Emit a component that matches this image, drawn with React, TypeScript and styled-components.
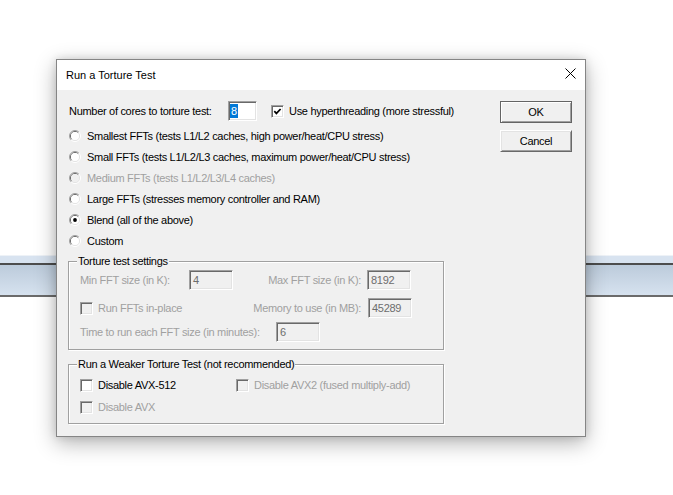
import React from 'react';
import styled, { createGlobalStyle, css } from 'styled-components';

const UI_FONT = `"Liberation Sans", Arial, sans-serif`;

const GlobalStyle = createGlobalStyle`
  html, body {
    margin: 0;
    padding: 0;
    background: #ffffff;
  }
  * {
    box-sizing: border-box;
  }
`;

const Desktop = styled.div`
  position: relative;
  width: 673px;
  height: 495px;
  overflow: hidden;
  background: #ffffff;
  font-family: ${UI_FONT};
  font-size: 11px;
  color: #000;
`;

/* the toolbar strip of the window behind the dialog */
const Band = styled.div`
  margin-top: 255px;
`;

const BandCap = styled.div`
  height: 8px;
  border-top: 1px solid #eef2f7;
  background: #d8e3f0;
`;

const BandRail = styled.div`
  height: 34px;
  border-top: 2px solid #4d4d4d;
  border-bottom: 2px solid #6b6b6b;
  background: linear-gradient(180deg, #bccbdb 0%, #d6e2ef 100%);
`;

const Window = styled.section`
  position: absolute;
  left: 56px;
  top: 59px;
  width: 530px;
  height: 378px;
  display: flex;
  flex-direction: column;
  border: 1px solid #858585;
  background: #f0f0f0;
  box-shadow: 0 6px 20px rgba(0, 0, 0, 0.3), 0 0 8px rgba(0, 0, 0, 0.12);
`;

const TitleBar = styled.header`
  height: 30px;
  flex: none;
  display: flex;
  align-items: center;
  justify-content: space-between;
  padding-left: 9px;
  background: #ffffff;
`;

const TitleText = styled.span`
  font-size: 11px;
  color: #000;
`;

const CloseButton = styled.div`
  width: 29px;
  height: 30px;
  display: flex;
  justify-content: center;
  padding-top: 8px;
`;

/* dialog controls use a tighter, narrower-looking system face */
const DialogBody = styled.div`
  flex: 1;
  display: flex;
  justify-content: space-between;
  padding: 11px 13px 11px 11px;
  letter-spacing: -0.3px;
`;

const MainColumn = styled.div`
  width: 376px;
  display: flex;
  flex-direction: column;
`;

const ButtonColumn = styled.div`
  width: 72px;
  display: flex;
  flex-direction: column;
  gap: 7px;
`;

const PushButton = styled.div<{ $default?: boolean }>`
  width: 72px;
  height: 22px;
  display: flex;
  align-items: center;
  justify-content: center;
  background: #f0f0f0;
  color: #000;
  ${p =>
    p.$default
      ? css`
          border: 1px solid #646464;
          box-shadow: inset 1px 1px 0 #ffffff, inset -1px -1px 0 #a0a0a0;
        `
      : css`
          border: 1px solid;
          border-color: #ffffff #696969 #696969 #ffffff;
          box-shadow: inset 1px 1px 0 #e3e3e3, inset -1px -1px 0 #a0a0a0;
        `}
`;

const CoresRow = styled.div`
  height: 20px;
  display: flex;
  align-items: center;
  padding-left: 1px;
`;

const OptionList = styled.div`
  margin-top: 4px;
  display: flex;
  flex-direction: column;
`;

const OptionRow = styled.div`
  height: 21px;
  display: flex;
  align-items: center;
  padding-left: 1px;
`;

const Label = styled.span<{ $w?: number; $right?: boolean; $dim?: boolean; $ml?: number }>`
  flex: none;
  white-space: nowrap;
  ${p => (p.$w ? `width: ${p.$w}px;` : '')}
  ${p => (p.$ml ? `margin-left: ${p.$ml}px;` : '')}
  text-align: ${p => (p.$right ? 'right' : 'left')};
  color: ${p => (p.$dim ? '#a0a0a0' : '#000')};
`;

const TextBox = styled.div<{ $w: number; $disabled?: boolean; $ml?: number }>`
  width: ${p => p.$w}px;
  height: 20px;
  flex: none;
  display: flex;
  align-items: center;
  padding-left: 3px;
  ${p => (p.$ml ? `margin-left: ${p.$ml}px;` : '')}
  background: ${p => (p.$disabled ? '#f0f0f0' : '#ffffff')};
  color: ${p => (p.$disabled ? '#6d6d6d' : '#000')};
  border: 1px solid;
  border-color: #a0a0a0 #ffffff #ffffff #a0a0a0;
  box-shadow: inset 1px 1px 0 #696969, inset -1px -1px 0 #e3e3e3;
`;

const CoresBox = styled(TextBox)`
  padding-left: 1px;
`;

const Selection = styled.span`
  background: #0078d7;
  color: #ffffff;
  line-height: 14px;
  padding: 0 1px;
`;

const CheckFrame = styled.span<{ $disabled?: boolean; $ml?: number }>`
  width: 13px;
  height: 13px;
  flex: none;
  display: inline-flex;
  align-items: center;
  justify-content: center;
  ${p => (p.$ml ? `margin-left: ${p.$ml}px;` : '')}
  background: ${p => (p.$disabled ? '#f0f0f0' : '#ffffff')};
  border: 1px solid;
  border-color: #a0a0a0 #ffffff #ffffff #a0a0a0;
  box-shadow: inset 1px 1px 0 #696969, inset -1px -1px 0 #e3e3e3;
`;

const CheckItem = styled.div<{ $w?: number }>`
  display: flex;
  align-items: center;
  gap: 5px;
  flex: none;
  ${p => (p.$w ? `width: ${p.$w}px;` : '')}
`;

const RadioMark = styled.svg`
  flex: none;
  margin-right: 6px;
`;

const GroupBox = styled.div<{ $mt: number; $pad: string }>`
  position: relative;
  margin-top: ${p => p.$mt}px;
  padding: ${p => p.$pad};
  border: 1px solid #a0a0a0;
  box-shadow: inset 1px 1px 0 #ffffff, 1px 1px 0 #ffffff;
`;

const GroupTitle = styled.span`
  position: absolute;
  top: -7px;
  left: 8px;
  padding: 0 1px;
  line-height: 13px;
  background: #f0f0f0;
  color: #000;
`;

const FieldRow = styled.div<{ $mt?: number }>`
  height: 20px;
  display: flex;
  align-items: center;
  margin-top: ${p => p.$mt ?? 0}px;
`;

const CheckBox: React.FC<{ checked?: boolean; disabled?: boolean; ml?: number }> = ({
  checked,
  disabled,
  ml,
}) => (
  <CheckFrame $disabled={disabled} $ml={ml}>
    {checked && (
      <svg width="9" height="9" viewBox="0 0 9 9">
        <polyline points="1.3,4.2 3.4,6.4 7.6,2" fill="none" stroke="#000" strokeWidth="1.7" />
      </svg>
    )}
  </CheckFrame>
);

const Radio: React.FC<{ checked?: boolean; disabled?: boolean }> = ({ checked, disabled }) => (
  <RadioMark width="12" height="12" viewBox="0 0 12 12">
    <path d="M2.1 9.9 A5.5 5.5 0 0 1 9.9 2.1" fill="none" stroke="#a0a0a0" />
    <path d="M9.9 2.1 A5.5 5.5 0 0 1 2.1 9.9" fill="none" stroke="#ffffff" />
    <path d="M2.8 9.2 A4.5 4.5 0 0 1 9.2 2.8" fill="none" stroke="#696969" />
    <path d="M9.2 2.8 A4.5 4.5 0 0 1 2.8 9.2" fill="none" stroke="#e3e3e3" />
    <circle cx="6" cy="6" r="4" fill={disabled ? '#f0f0f0' : '#ffffff'} />
    {checked && <circle cx="6" cy="6" r="1.9" fill={disabled ? '#a0a0a0' : '#000'} />}
  </RadioMark>
);

const options = [
  { label: 'Smallest FFTs (tests L1/L2 caches, high power/heat/CPU stress)' },
  { label: 'Small FFTs (tests L1/L2/L3 caches, maximum power/heat/CPU stress)' },
  { label: 'Medium FFTs (tests L1/L2/L3/L4 caches)', disabled: true },
  { label: 'Large FFTs (stresses memory controller and RAM)' },
  { label: 'Blend (all of the above)', checked: true },
  { label: 'Custom' },
];

export default function App() {
  return (
    <>
      <GlobalStyle />
      <Desktop>
        <Band>
          <BandCap />
          <BandRail />
        </Band>

        <Window>
          <TitleBar>
            <TitleText>Run a Torture Test</TitleText>
            <CloseButton>
              <svg width="11" height="11" viewBox="0 0 11 11">
                <path d="M0.5 0.5 L10.5 10.5 M10.5 0.5 L0.5 10.5" stroke="#000" strokeWidth="1" />
              </svg>
            </CloseButton>
          </TitleBar>

          <DialogBody>
            <MainColumn>
              <CoresRow>
                <Label $w={159}>Number of cores to torture test:</Label>
                <CoresBox $w={29}>
                  <Selection>8</Selection>
                </CoresBox>
                <CheckItem>
                  <CheckBox checked ml={14} />
                  <Label>Use hyperthreading (more stressful)</Label>
                </CheckItem>
              </CoresRow>

              <OptionList>
                {options.map(o => (
                  <OptionRow key={o.label}>
                    <Radio checked={o.checked} disabled={o.disabled} />
                    <Label $dim={o.disabled}>{o.label}</Label>
                  </OptionRow>
                ))}
              </OptionList>

              <GroupBox $mt={10} $pad="8px 0 7px 11px">
                <GroupTitle>Torture test settings</GroupTitle>
                <FieldRow>
                  <Label $w={109} $dim>Min FFT size (in K):</Label>
                  <TextBox $w={44} $disabled>4</TextBox>
                  <Label $w={128} $right $dim>Max FFT size (in K):</Label>
                  <TextBox $w={44} $disabled $ml={6}>8192</TextBox>
                </FieldRow>
                <FieldRow $mt={8}>
                  <CheckItem $w={173}>
                    <CheckBox disabled />
                    <Label $dim>Run FFTs in-place</Label>
                  </CheckItem>
                  <Label $w={108} $right $dim>Memory to use (in MB):</Label>
                  <TextBox $w={44} $disabled $ml={7}>45289</TextBox>
                </FieldRow>
                <FieldRow $mt={4}>
                  <Label $w={196} $dim>Time to run each FFT size (in minutes):</Label>
                  <TextBox $w={44} $disabled>6</TextBox>
                </FieldRow>
              </GroupBox>

              <GroupBox $mt={14} $pad="10px 0 6px 11px">
                <GroupTitle>Run a Weaker Torture Test (not recommended)</GroupTitle>
                <FieldRow>
                  <CheckItem $w={156}>
                    <CheckBox />
                    <Label>Disable AVX-512</Label>
                  </CheckItem>
                  <CheckItem>
                    <CheckBox disabled />
                    <Label $dim>Disable AVX2 (fused multiply-add)</Label>
                  </CheckItem>
                </FieldRow>
                <FieldRow $mt={2}>
                  <CheckItem>
                    <CheckBox disabled />
                    <Label $dim>Disable AVX</Label>
                  </CheckItem>
                </FieldRow>
              </GroupBox>
            </MainColumn>

            <ButtonColumn>
              <PushButton $default>OK</PushButton>
              <PushButton>Cancel</PushButton>
            </ButtonColumn>
          </DialogBody>
        </Window>
      </Desktop>
    </>
  );
}
